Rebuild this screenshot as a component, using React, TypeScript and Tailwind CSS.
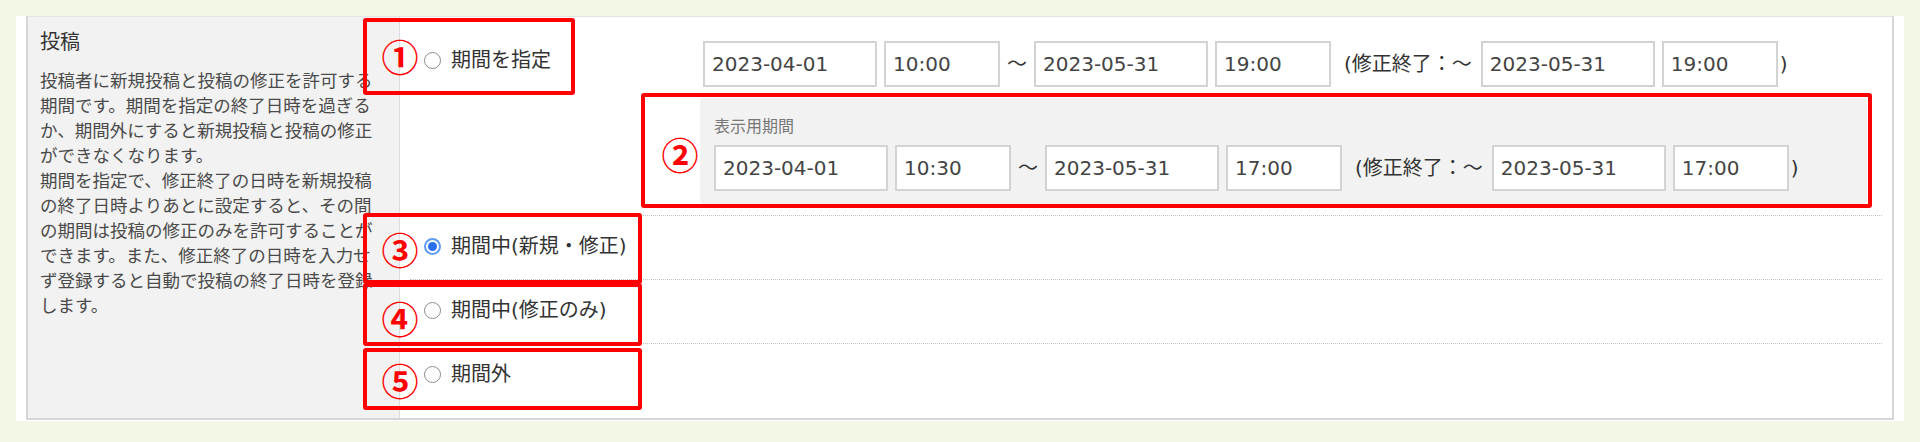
import React from "react";

const JP = "font-['DejaVu_Sans','Noto_Sans_CJK_JP',sans-serif]";

function Box({ w, children }: { w: string; children: React.ReactNode }) {
  return (
    <div
      className={`${w} h-[46px] shrink-0 border-2 border-[#d3d3d3] bg-white flex items-center pl-[7px] text-[20px] text-[#444] font-['DejaVu_Sans',sans-serif]`}
    >
      {children}
    </div>
  );
}

function DateRow({ a, b, c, d, e, f }: { a: string; b: string; c: string; d: string; e: string; f: string }) {
  return (
    <div className={`flex items-center text-[20px] text-[#333] ${JP}`}>
      <Box w="w-[174px]">{a}</Box>
      <Box w="w-[116px] ml-[7px]">{b}</Box>
      <span className="mx-[7px] w-[20px] text-center">～</span>
      <Box w="w-[174px]">{c}</Box>
      <Box w="w-[116px] ml-[7px]">{d}</Box>
      <span className="ml-[13px] mr-[9px] whitespace-nowrap">(修正終了：～</span>
      <Box w="w-[174px]">{e}</Box>
      <Box w="w-[116px] ml-[7px]">{f}</Box>
      <span className="ml-[2px]">)</span>
    </div>
  );
}

function Radio({ checked }: { checked?: boolean }) {
  if (checked) {
    return (
      <span className="w-[17px] h-[17px] shrink-0 rounded-full border-2 border-[#5e9bf7] bg-white flex items-center justify-center">
        <span className="w-[9px] h-[9px] rounded-full bg-[#2a6ff0]" />
      </span>
    );
  }
  return <span className="w-[17px] h-[17px] shrink-0 rounded-full border border-[#8a8a8a] bg-white" />;
}

function RadioLabel({ label, checked }: { label: string; checked?: boolean }) {
  return (
    <div className={`flex items-center gap-[10px] pl-[14px] h-[24px] text-[20px] leading-[24px] text-[#333] whitespace-nowrap ${JP}`}>
      <Radio checked={checked} />
      <span>{label}</span>
    </div>
  );
}

function Circled({ ch, x, y }: { ch: string; x: number; y: number }) {
  return (
    <span
      className="absolute w-[44px] h-[44px] flex items-center justify-center text-[37px] leading-[44px] font-bold text-[#ff0000] font-['Noto_Sans_CJK_JP',sans-serif]"
      style={{ left: x - 22, top: y - 22 }}
    >
      {ch}
    </span>
  );
}

function RedBox({ x, y, w, h }: { x: number; y: number; w: number; h: number }) {
  return (
    <div
      className="absolute border-4 border-[#ff0000] rounded-[3px]"
      style={{ left: x, top: y, width: w, height: h }}
    />
  );
}

export default function App() {
  return (
    <div className="relative w-full h-[442px] bg-[#f3f8e6] pt-[16px] px-[16px] overflow-hidden">
      <div className="bg-white px-[10px] pb-[1px]">
        <div className="flex border-x-2 border-b-2 border-t border-[#d6d6d6] border-t-[#e4e4e4]">
          <div className={`w-[372px] shrink-0 bg-[#f2f2f2] border-r border-[#dcdcdc] pl-[12px] pt-[11px] ${JP}`}>
            <div className="text-[20px] leading-[28px] text-[#333]">投稿</div>
            <p className="mt-[13px] w-[340px] text-[17.5px] leading-[25px] text-[#4a4a4a]">
              投稿者に新規投稿と投稿の修正を許可する期間です。期間を指定の終了日時を過ぎるか、期間外にすると新規投稿と投稿の修正ができなくなります。
              <br />
              期間を指定で、修正終了の日時を新規投稿の終了日時よりあとに設定すると、その間の期間は投稿の修正のみを許可することができます。また、修正終了の日時を入力せず登録すると自動で投稿の終了日時を登録します。
            </p>
          </div>
          <div className="flex-1 px-[10px] pb-[11px]">
            <div className="flex items-start pt-[24px] pb-[11px] border-b border-dotted border-[#c4c4c4]">
              <div className="w-[290px] shrink-0 mt-[7px]">
                <RadioLabel label="期間を指定" />
              </div>
              <div className="flex-1 flex flex-col gap-[11px]">
                <div className="pl-[3px]">
                  <DateRow a="2023-04-01" b="10:00" c="2023-05-31" d="19:00" e="2023-05-31" f="19:00" />
                </div>
                <div className="mr-[15px] bg-[#f2f2f2] rounded-[4px] pl-[14px] pt-[17px] pb-[13px]">
                  <div className={`text-[16px] leading-[24px] text-[#777] ${JP}`}>表示用期間</div>
                  <div className="mt-[6px]">
                    <DateRow a="2023-04-01" b="10:30" c="2023-05-31" d="17:00" e="2023-05-31" f="17:00" />
                  </div>
                </div>
              </div>
            </div>
            <div className="pt-[18px] pb-[21px] border-b border-dotted border-[#c4c4c4]">
              <RadioLabel label="期間中(新規・修正)" checked />
            </div>
            <div className="pt-[18px] pb-[21px] border-b border-dotted border-[#c4c4c4]">
              <RadioLabel label="期間中(修正のみ)" />
            </div>
            <div className="pt-[18px] pb-[21px]">
              <RadioLabel label="期間外" />
            </div>
          </div>
        </div>
      </div>

      <RedBox x={363} y={18} w={212} h={77} />
      <RedBox x={641} y={93} w={1231} h={115} />
      <RedBox x={363} y={213} w={279} h={71} />
      <RedBox x={363} y={283} w={279} h={63} />
      <RedBox x={363} y={348} w={279} h={62} />

      <Circled ch="①" x={400} y={56} />
      <Circled ch="②" x={680} y={154} />
      <Circled ch="③" x={400} y={249} />
      <Circled ch="④" x={400} y={318} />
      <Circled ch="⑤" x={400} y={380} />
    </div>
  );
}
